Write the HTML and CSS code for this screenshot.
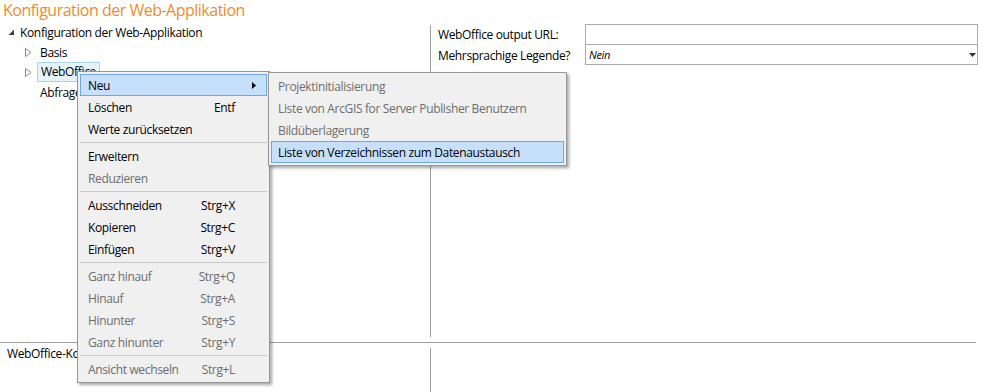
FILE: index.html
```html
<!DOCTYPE html>
<html lang="de">
<head>
<meta charset="utf-8">
<title>Konfiguration der Web-Applikation</title>
<link rel="stylesheet" href="styles.css">
</head>
<body>
<div class="page">
  <div class="title">Konfiguration der Web-Applikation</div>
  <div class="main">
    <div class="tree">
      <div class="row root">
        <svg class="exp" width="7" height="7" viewBox="0 0 7 7"><path d="M6 0.5 L6 6 L0.5 6 Z" fill="#404040"/></svg>
        <span>Konfiguration der Web-Applikation</span>
      </div>
      <div class="row child">
        <svg class="exp" width="7" height="9" viewBox="0 0 7 9"><path d="M0.5 0.5 L6 4.5 L0.5 8.5 Z" fill="none" stroke="#8a8a8a"/></svg>
        <span>Basis</span>
      </div>
      <div class="row child">
        <svg class="exp" width="7" height="9" viewBox="0 0 7 9"><path d="M0.5 0.5 L6 4.5 L0.5 8.5 Z" fill="none" stroke="#8a8a8a"/></svg>
        <span class="sel">WebOffice</span>
      </div>
      <div class="row child">
        <span class="noexp"></span>
        <span>Abfragen</span>
      </div>
    </div>
    <div class="vline"></div>
    <div class="props">
      <div class="plabel">WebOffice output URL:</div>
      <div class="field input"></div>
      <div class="plabel">Mehrsprachige Legende?</div>
      <div class="field combo"><span class="val">Nein</span><svg width="7" height="4" viewBox="0 0 7 4"><path d="M0 0 H7 L3.5 4 Z" fill="#333"/></svg></div>
    </div>
  </div>
  <div class="hline"></div>
  <div class="bottom">
    <div class="status">WebOffice-Konfiguration</div>
    <div class="vline"></div>
  </div>

  <div class="menu">
    <div class="item hot"><span class="lbl">Neu</span><svg class="arrow" width="4" height="7" viewBox="0 0 4 7"><path d="M0 0 L4 3.5 L0 7 Z" fill="#000"/></svg></div>
    <div class="item"><span class="lbl">Löschen</span><span class="key">Entf</span></div>
    <div class="item"><span class="lbl">Werte zurücksetzen</span></div>
    <div class="sep"></div>
    <div class="item"><span class="lbl">Erweitern</span></div>
    <div class="item dis"><span class="lbl">Reduzieren</span></div>
    <div class="sep"></div>
    <div class="item"><span class="lbl">Ausschneiden</span><span class="key">Strg+X</span></div>
    <div class="item"><span class="lbl">Kopieren</span><span class="key">Strg+C</span></div>
    <div class="item"><span class="lbl">Einfügen</span><span class="key">Strg+V</span></div>
    <div class="sep"></div>
    <div class="item dis"><span class="lbl">Ganz hinauf</span><span class="key">Strg+Q</span></div>
    <div class="item dis"><span class="lbl">Hinauf</span><span class="key">Strg+A</span></div>
    <div class="item dis"><span class="lbl">Hinunter</span><span class="key">Strg+S</span></div>
    <div class="item dis"><span class="lbl">Ganz hinunter</span><span class="key">Strg+Y</span></div>
    <div class="sep"></div>
    <div class="item dis"><span class="lbl">Ansicht wechseln</span><span class="key">Strg+L</span></div>
  </div>

  <div class="submenu">
    <div class="item dis"><span class="lbl">Projektinitialisierung</span></div>
    <div class="item dis"><span class="lbl">Liste von ArcGIS for Server Publisher Benutzern</span></div>
    <div class="item dis"><span class="lbl">Bildüberlagerung</span></div>
    <div class="item hot"><span class="lbl">Liste von Verzeichnissen zum Datenaustausch</span></div>
  </div>
</div>
</body>
</html>
```
FILE: styles.css
```css
html, body {
  margin: 0;
  padding: 0;
  background: #ffffff;
}
body {
  font-family: "Open Sans", "Noto Sans", "Liberation Sans", sans-serif;
  font-size: 12px;
  letter-spacing: -0.35px;
  color: #000;
}
.page {
  position: relative;
  width: 982px;
  height: 392px;
  overflow: hidden;
}
.title {
  height: 20px;
  line-height: 20px;
  padding-left: 3px;
  font-size: 16px;
  letter-spacing: -0.5px;
  color: #ef8b2c;
  white-space: nowrap;
}
.main {
  display: flex;
  height: 322px;
}
.tree {
  width: 430px;
  padding-top: 2px;
}
.row {
  display: flex;
  align-items: center;
  height: 20px;
  white-space: nowrap;
}
.row.root {
  padding-left: 8px;
}
.row.root .exp {
  margin-right: 5px;
}
.row.child {
  padding-left: 25px;
}
.row.child .exp {
  margin-right: 8px;
}
.noexp {
  display: inline-block;
  width: 15px;
}
.sel {
  margin-left: -3px;
  padding: 0 3px;
  height: 18px;
  line-height: 18px;
  background: #e5f3fb;
  border: 1px solid #a9d4ee;
}
.vline {
  width: 1px;
  background: #a0a0a0;
  margin: 5px 0;
}
.props {
  flex: 1;
  display: grid;
  grid-template-columns: 147px 393px;
  grid-template-rows: 21px 20px;
  align-content: start;
  padding: 4px 0 0 7px;
}
.plabel {
  display: flex;
  align-items: center;
  white-space: nowrap;
}
.field {
  border: 1px solid #ababab;
  box-sizing: border-box;
}
.input {
  height: 21px;
}
.combo {
  height: 21px;
  margin-top: -1px;
  display: flex;
  align-items: center;
  justify-content: space-between;
  padding: 0 1px 0 3px;
}
.combo .val {
  font-style: italic;
  font-size: 11px;
}
.hline {
  height: 1px;
  background: #a0a0a0;
  margin-right: 6px;
}
.bottom {
  display: flex;
  height: 49px;
}
.status {
  width: 423px;
  padding: 2px 0 0 7px;
  white-space: nowrap;
}
.bottom .vline {
  margin: 5px 0 0;
}

/* context menu */
.menu, .submenu {
  position: absolute;
  background: #f0f0f0;
  border: 1px solid #979797;
  box-shadow: 2px 2px 3px rgba(0, 0, 0, 0.35);
  padding: 2px;
  box-sizing: border-box;
}
.menu {
  left: 77px;
  top: 71px;
  width: 193px;
}
.submenu {
  left: 268px;
  top: 72px;
  width: 299px;
}
.item {
  position: relative;
  display: flex;
  align-items: center;
  height: 22px;
  padding: 0 10px 0 7px;
  border: 1px solid transparent;
  box-sizing: border-box;
  white-space: nowrap;
}
.submenu .item {
  padding-left: 6px;
}
.item .lbl {
  flex: 1;
}
.item .key {
  margin-right: 21px;
}
.item.dis {
  color: #6d6d6d;
}
.item.hot {
  background: #c6e0fb;
  border-color: #6fa6e4;
}
.sep {
  height: 5px;
  display: flex;
  align-items: center;
}
.sep::before {
  content: "";
  display: block;
  height: 1px;
  width: 100%;
  background: #c8c8c8;
}
```
